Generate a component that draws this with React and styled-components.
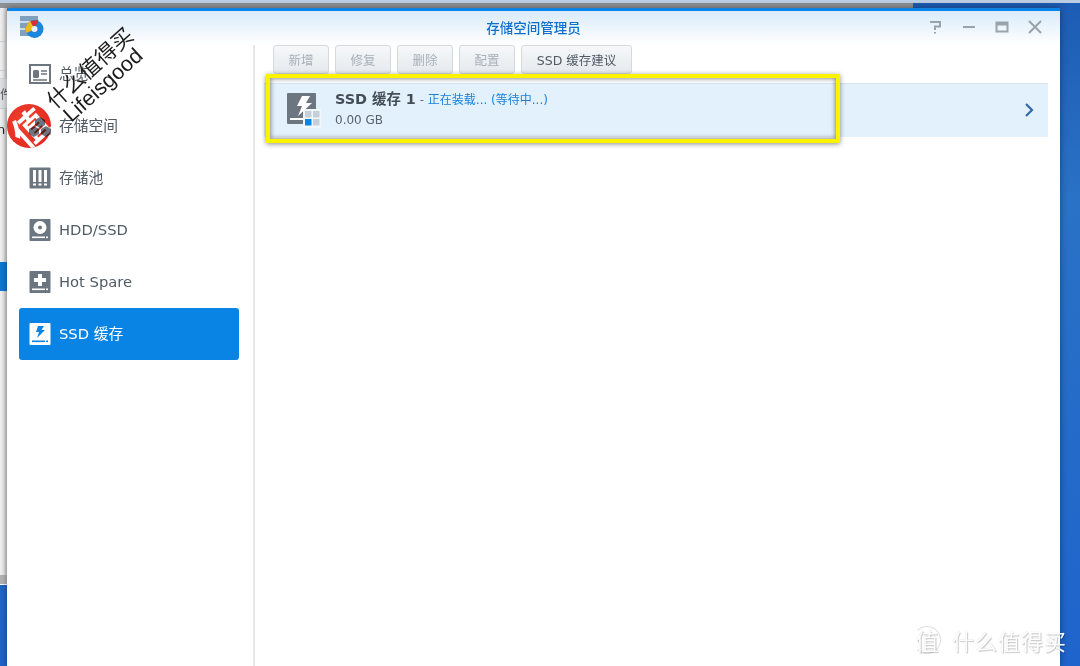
import React from 'react';
import styled, { createGlobalStyle } from 'styled-components';

const sans = `'DejaVu Sans', 'Noto Sans CJK SC', sans-serif`;
const cjk = `'Noto Sans CJK SC', 'Noto Sans', sans-serif`;

const Global = createGlobalStyle`
    html, body { margin: 0; padding: 0; background: #1f62c4; overflow: hidden; }
`;

const Desktop = styled.div`
    position: relative;
    width: 1080px;
    height: 666px;
    overflow: hidden;
    background: linear-gradient(180deg, #1d5cb4 0%, #2a72c6 30%, #1f64cc 100%);
    font-family: ${sans};
`;

const TopStrip = styled.div`
    height: 3px;
    background: #bccde4;
`;

const BackWindow = styled.div`
    position: absolute;
    left: 0;
    top: 3px;
    width: 913px;
    height: 581px;
    border-bottom: 1px solid #fff;
    background: linear-gradient(90deg, #f1f1f1 0%, #ececec 3px, #c6c6c6 7px);
    overflow: hidden;
`;

const BackBar = styled.div`
    height: 5px;
    background: #8f9296;
`;

const BackField = styled.div`
    position: absolute;
    left: -10px;
    top: 38px;
    width: 15px;
    height: 28px;
    border: 1px solid #cfd2d6;
    border-radius: 3px;
`;

const BackTab = styled.div`
    position: absolute;
    left: 0;
    top: 75px;
    width: 7px;
    height: 29px;
    border-top: 1px solid #d4d7db;
    border-bottom: 1px solid #c3cad3;
    background: #dfe2e6;
    color: #555;
    font: 12px/29px ${cjk};
    overflow: hidden;
    white-space: nowrap;
`;

const BackLabel = styled.div`
    position: absolute;
    left: -3px;
    top: 118px;
    font: 13px/18px ${sans};
    color: #222;
`;

const BackSelection = styled.div`
    position: absolute;
    left: 0;
    top: 259px;
    width: 7px;
    height: 29px;
    background: #0a78d4;
`;

const BackFooter = styled.div`
    position: absolute;
    left: 0;
    bottom: 0;
    width: 7px;
    height: 9px;
    background: #b4b4b4;
`;

const Window = styled.div`
    position: absolute;
    left: 7px;
    top: 8px;
    width: 1053px;
    height: 658px;
    display: flex;
    flex-direction: column;
    background: #fff;
    border-top: 3px solid #0a84e4;
    box-sizing: border-box;
    box-shadow: 0 0 7px rgba(0, 0, 0, 0.4);
`;

const Header = styled.header`
    flex: none;
    height: 34px;
    box-sizing: border-box;
    display: flex;
    align-items: center;
    padding: 0 17px 2px 13px;
    background: linear-gradient(180deg, #d9ebfa 0%, #ffffff 100%);
`;

const AppIcon = styled.svg`
    flex: none;
    width: 24px;
    height: 24px;
`;

const Title = styled.h1`
    flex: 1;
    margin: 0;
    padding-left: 95px;
    text-align: center;
    font: 500 13.5px/20px ${cjk};
    color: #0f6fcf;
`;

const Controls = styled.div`
    display: flex;
    gap: 17px;
`;

const ControlIcon = styled.svg`
    width: 16px;
    height: 16px;
    fill: none;
    stroke: #98a3ab;
    stroke-width: 2;
`;

const Body = styled.div`
    flex: 1;
    display: flex;
    min-height: 0;
`;

const Sidebar = styled.nav`
    flex: none;
    width: 248px;
    box-sizing: border-box;
    padding: 3px 14px 0 12px;
    border-right: 2px solid #e6e8ea;
    display: flex;
    flex-direction: column;
`;

const NavItem = styled.div`
    height: 52px;
    box-sizing: border-box;
    padding-left: 10px;
    display: flex;
    align-items: center;
    gap: 8px;
    border-radius: 3px;
    font: 14.75px/20px ${sans};
    color: ${p => (p.$active ? '#fff' : '#515b65')};
    background: ${p => (p.$active ? '#0a84e4' : 'transparent')};
`;

const NavIcon = styled.svg`
    flex: none;
    width: 22px;
    height: 24px;
`;

const Main = styled.main`
    flex: 1;
    padding: 0 12px 0 9px;
`;

const Toolbar = styled.div`
    display: flex;
    gap: 6px;
    height: 29px;
    margin-left: 9px;
    margin-bottom: 9px;
`;

const ToolButton = styled.button`
    height: 29px;
    width: ${p => (p.$wide ? '111px' : '56px')};
    padding: 2px 0 0;
    border: 1px solid #d3d9df;
    border-radius: 3px;
    background: linear-gradient(180deg, #f6f8fa 0%, #e5e9ed 100%);
    font: 12.5px/25px ${sans};
    color: ${p => (p.$disabled ? '#a7afb7' : '#505a64')};
`;

const VolumeRow = styled.div`
    height: 54px;
    display: flex;
    align-items: center;
    box-sizing: border-box;
    padding: 0 13px 4px 23px;
    border-top: 1px solid #d5e4f1;
    background: #e3f1fc;
`;

const VolumeIcon = styled.svg`
    flex: none;
    width: 34px;
    height: 36px;
    margin: 4px 14px 0 0;
`;

const VolumeText = styled.div`
    flex: 1;
    display: flex;
    flex-direction: column;
    gap: 3px;
`;

const VolumeTitle = styled.div`
    display: flex;
    align-items: baseline;
    font: 12px/18px ${sans};
    color: #6b747d;
    white-space: pre;
`;

const VolumeName = styled.span`
    font: 700 14.4px/18px ${sans};
    color: #454e57;
`;

const VolumeStatus = styled.span`
    font: 12px/18px ${sans};
    color: #1a82dc;
`;

const VolumeSize = styled.div`
    font: 12px/16px ${sans};
    color: #59636c;
`;

const Chevron = styled.svg`
    width: 12px;
    height: 16px;
    margin-top: 2px;
    fill: none;
    stroke: #2f6aa8;
    stroke-width: 2.2;
`;

const Highlight = styled.div`
    position: absolute;
    left: 266px;
    top: 74px;
    width: 574px;
    height: 69px;
    box-sizing: border-box;
    border: 4.5px solid #fbf300;
    box-shadow: 0 1px 5px rgba(0, 0, 0, 0.45), inset 0 0 4px 1px rgba(70, 70, 70, 0.6);
`;

const StampText = styled.div`
    position: absolute;
    left: ${p => p.$x}px;
    top: ${p => p.$y}px;
    width: 130px;
    text-align: center;
    transform: translate(-50%, -50%) rotate(-42deg);
    font: 21.5px/26px ${p => (p.$latin ? `'Liberation Sans', sans-serif` : cjk)};
    color: #1c1c1c;
    white-space: nowrap;
`;

const StampBadge = styled.div`
    position: absolute;
    left: 7px;
    top: 104px;
    width: 44px;
    height: 44px;
    border-radius: 50%;
    overflow: hidden;
    display: flex;
    align-items: center;
    justify-content: center;
    mix-blend-mode: multiply;
    background: radial-gradient(circle at 40% 40%, #f0412f 0%, #e42c22 70%, #d5261f 100%);
    color: #fff;
    font: 700 36px/44px ${cjk};
`;

const StampGlyph = styled.span`
    transform: rotate(-42deg);
`;

const CornerMark = styled.div`
    position: absolute;
    left: 913px;
    top: 626px;
    display: flex;
    align-items: center;
    gap: 11px;
    color: #fff;
    text-shadow: 1px 1px 1px rgba(0, 0, 0, 0.2), 0 0 1px rgba(0, 0, 0, 0.2);
`;

const CornerBadge = styled.div`
    width: 28px;
    height: 28px;
    box-sizing: border-box;
    display: flex;
    align-items: center;
    justify-content: center;
    border: 1px solid #e0e0e0;
    border-left-color: transparent;
    border-radius: 50%;
    font: 23px/26px ${cjk};
`;

const CornerText = styled.div`
    font: 22px/28px ${cjk};
    letter-spacing: 1px;
`;

const Slot = ({ cut }) => (
    <>
        <rect x="3" y="18.5" width="13" height="1.6" fill={cut} />
        <rect x="17" y="18.5" width="2" height="1.6" fill={cut} />
    </>
);

const OverviewIcon = () => (
    <NavIcon viewBox="0 0 22 24">
        <rect x="1" y="3" width="20" height="18" fill="none" stroke="#6b7680" strokeWidth="2" />
        <rect x="4" y="8" width="6" height="8" rx="1.5" fill="#6b7680" />
        <path d="M12 9h6M12 12h6M4 18h14" stroke="#6b7680" strokeWidth="1.6" />
    </NavIcon>
);

const StorageIcon = () => (
    <NavIcon viewBox="0 0 22 24">
        <path d="M11 3l5 3v5l-5 3-5-3V6z" fill="#6b7680" />
        <path d="M5 12l5 3v5l-5 3-5-3v-5z" fill="#6b7680" />
        <path d="M17 12l5 3v5l-5 3-5-3v-5z" fill="#6b7680" />
    </NavIcon>
);

const PoolIcon = () => (
    <NavIcon viewBox="0 0 22 24">
        <rect x="0.5" y="1.5" width="21" height="21" rx="1" fill="#6b7680" />
        <path d="M4 4h3v12H4zM9.5 4h3v12h-3zM15 4h3v12h-3z" fill="#fff" />
        <path d="M4 17.5h3v2H4zM9.5 17.5h3v2h-3zM15 17.5h3v2h-3z" fill="#fff" />
    </NavIcon>
);

const DiskIcon = () => (
    <NavIcon viewBox="0 0 22 24">
        <rect x="0.5" y="1" width="21" height="22" rx="1" fill="#6b7680" />
        <circle cx="11" cy="9.5" r="6.5" fill="#fff" />
        <circle cx="11" cy="9.5" r="2" fill="#6b7680" />
        <Slot cut="#fff" />
    </NavIcon>
);

const SpareIcon = () => (
    <NavIcon viewBox="0 0 22 24">
        <rect x="0.5" y="1" width="21" height="22" rx="1" fill="#6b7680" />
        <path d="M9 4h4v4h4v4h-4v4H9v-4H5V8h4z" fill="#fff" />
        <Slot cut="#fff" />
    </NavIcon>
);

const CacheIcon = () => (
    <NavIcon viewBox="0 0 22 24">
        <rect x="0.5" y="1" width="21" height="22" rx="1" fill="#fff" />
        <path d="M9 4h6l-2.5 4H16l-8 8 2-6H7z" fill="#0a84e4" />
        <Slot cut="#0a84e4" />
    </NavIcon>
);

const items = [
    { label: '总览', Icon: OverviewIcon },
    { label: '存储空间', Icon: StorageIcon },
    { label: '存储池', Icon: PoolIcon },
    { label: 'HDD/SSD', Icon: DiskIcon },
    { label: 'Hot Spare', Icon: SpareIcon },
    { label: 'SSD 缓存', Icon: CacheIcon, active: true },
];

const buttons = [
    { label: '新增', disabled: true },
    { label: '修复', disabled: true },
    { label: '删除', disabled: true },
    { label: '配置', disabled: true },
    { label: 'SSD 缓存建议', wide: true },
];

const App = () => {
    return (
        <Desktop>
            <Global />
            <TopStrip />
            <BackWindow>
                <BackBar />
                <BackField />
                <BackTab>件</BackTab>
                <BackLabel>n</BackLabel>
                <BackSelection />
                <BackFooter />
            </BackWindow>
            <Window>
                <Header>
                    <AppIcon viewBox="0 0 24 24">
                        <rect x="0" y="1" width="18" height="20" fill="#7fa0bf" />
                        <path d="M0 7h18M0 14h18" stroke="#e4edf4" strokeWidth="1.5" />
                        <circle cx="14.5" cy="14" r="9" fill="#1c86dc" />
                        <path d="M14.5 14L6.5 18a9 9 0 0 1 4-12z" fill="#f3b51c" />
                        <path d="M14.5 14l-4-8 8-1z" fill="#dd2c35" />
                        <circle cx="14.5" cy="14" r="3" fill="#eaf3fb" />
                    </AppIcon>
                    <Title>存储空间管理员</Title>
                    <Controls>
                        <ControlIcon viewBox="0 0 16 16">
                            <path d="M2 3h10v4.5H7V11M7 13v1.5" />
                        </ControlIcon>
                        <ControlIcon viewBox="0 0 16 16">
                            <path d="M2 8h12" />
                        </ControlIcon>
                        <ControlIcon viewBox="0 0 16 16">
                            <path d="M2.5 3.5h11v9h-11zM2.5 5.5h11" />
                        </ControlIcon>
                        <ControlIcon viewBox="0 0 16 16">
                            <path d="M2 2l12 12M14 2L2 14" />
                        </ControlIcon>
                    </Controls>
                </Header>
                <Body>
                    <Sidebar>
                        {items.map(({ label, Icon, active }) => (
                            <NavItem key={label} $active={active}>
                                <Icon />
                                {label}
                            </NavItem>
                        ))}
                    </Sidebar>
                    <Main>
                        <Toolbar>
                            {buttons.map(b => (
                                <ToolButton key={b.label} $disabled={b.disabled} $wide={b.wide}>
                                    {b.label}
                                </ToolButton>
                            ))}
                        </Toolbar>
                        <VolumeRow>
                            <VolumeIcon viewBox="0 0 34 36">
                                <rect x="0" y="0" width="29" height="31" rx="1" fill="#6b7680" />
                                <path d="M15 3h8l-4 7h6L11 23l4-10h-5z" fill="#fff" />
                                <rect x="3" y="25" width="14" height="2" fill="#fff" />
                                <rect x="16" y="16" width="18" height="19" fill="#f2f7fb" />
                                <rect x="18" y="18" width="6.5" height="6.5" fill="#c5cfd9" />
                                <rect x="26" y="18" width="6.5" height="6.5" fill="#c5cfd9" />
                                <rect x="18" y="26" width="6.5" height="6.5" fill="#0a84e4" />
                                <rect x="26" y="26" width="6.5" height="6.5" fill="#c5cfd9" />
                            </VolumeIcon>
                            <VolumeText>
                                <VolumeTitle>
                                    <VolumeName>SSD 缓存 1</VolumeName>
                                    {' - '}
                                    <VolumeStatus>正在装载... (等待中...)</VolumeStatus>
                                </VolumeTitle>
                                <VolumeSize>0.00 GB</VolumeSize>
                            </VolumeText>
                            <Chevron viewBox="0 0 12 16">
                                <path d="M3 2l6 6-6 6" />
                            </Chevron>
                        </VolumeRow>
                    </Main>
                </Body>
            </Window>
            <Highlight />
            <StampBadge>
                <StampGlyph>值</StampGlyph>
            </StampBadge>
            <StampText $x={89} $y={67}>什么值得买</StampText>
            <StampText $x={103} $y={85} $latin>Lifeisgood</StampText>
            <CornerMark>
                <CornerBadge>值</CornerBadge>
                <CornerText>什么值得买</CornerText>
            </CornerMark>
        </Desktop>
    );
};

export default App;
